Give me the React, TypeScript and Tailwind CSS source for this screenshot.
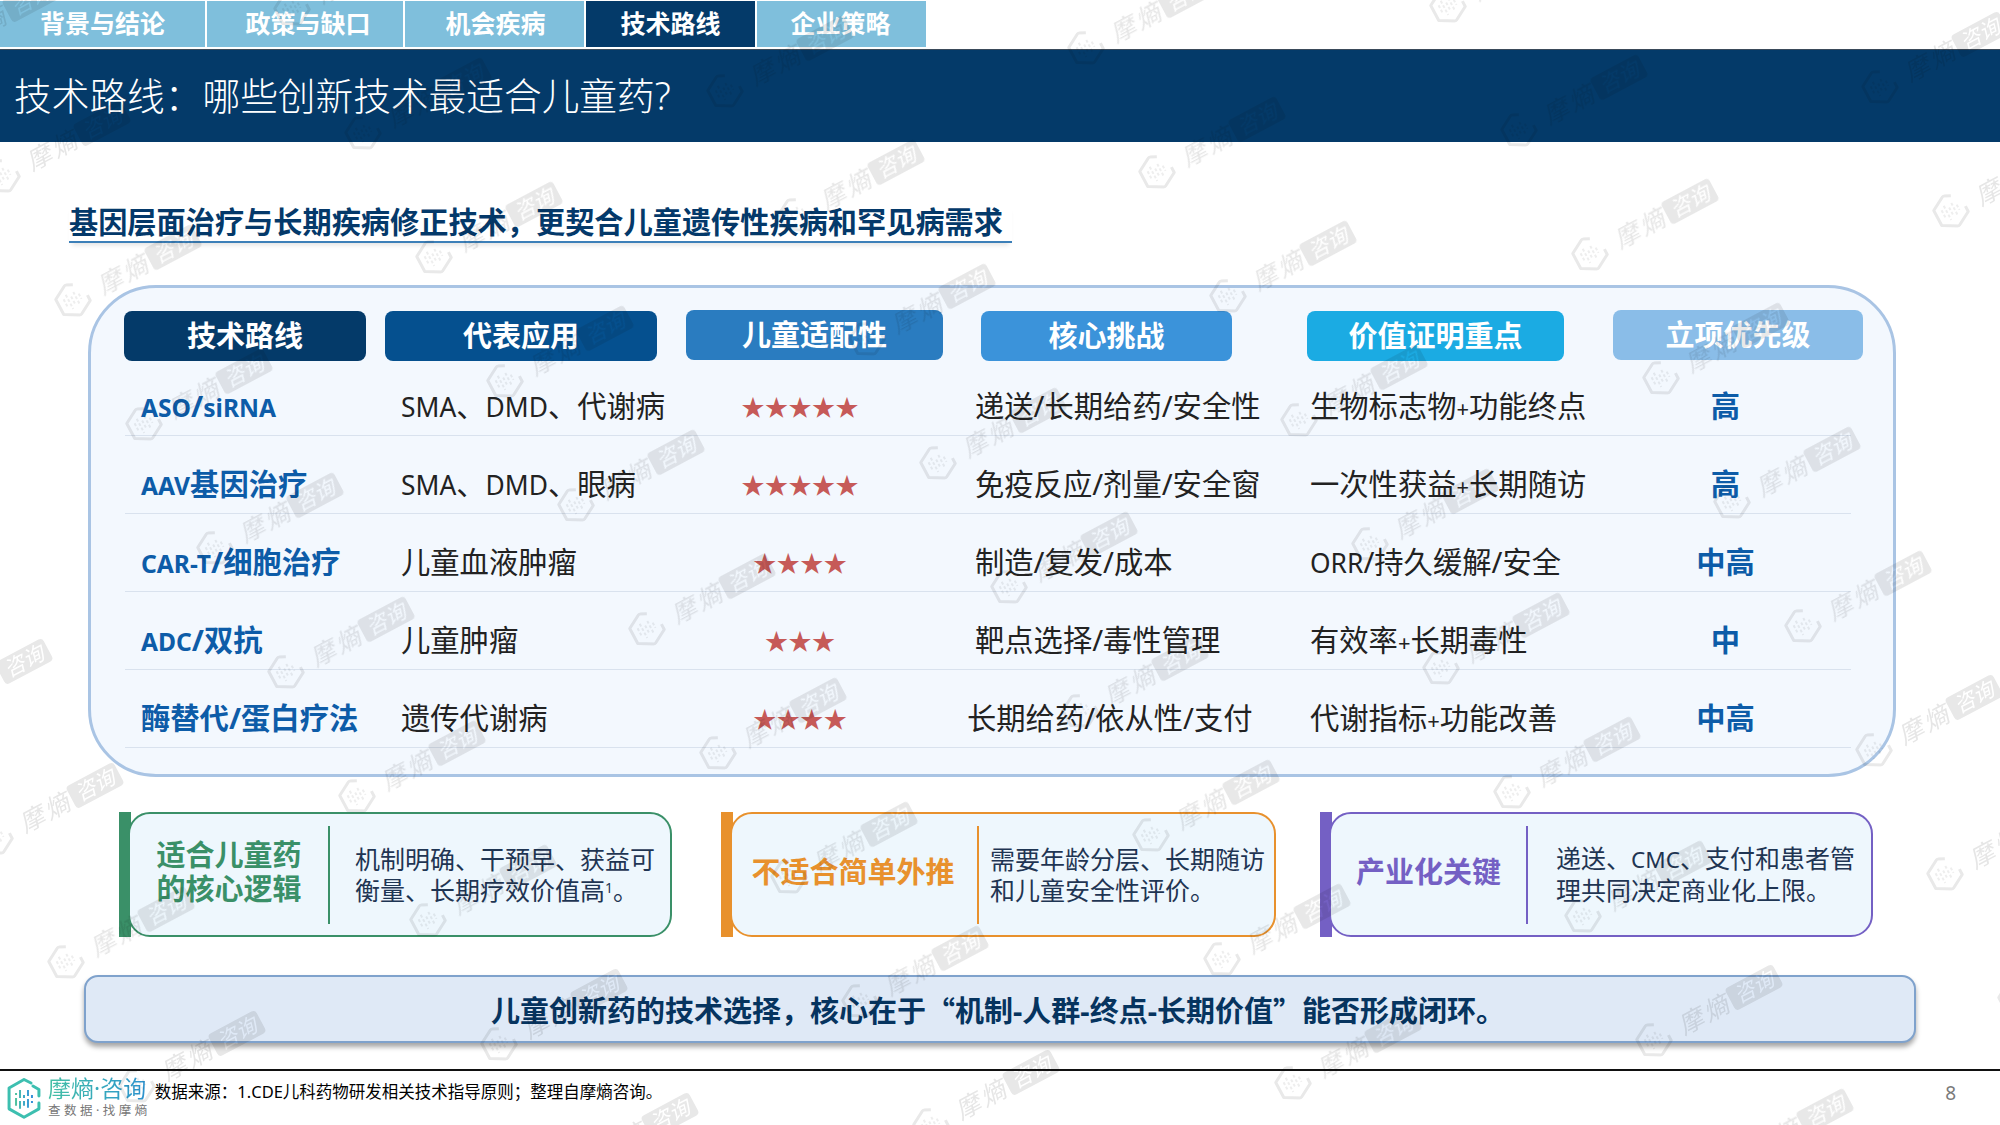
const tabs = [
  { label: "背景与结论", className: "w-[205px]" },
  { label: "政策与缺口", className: "w-[196px] pl-[6px]" },
  { label: "机会疾病", className: "w-[179px] pl-[2px]" },
  { label: "技术路线", className: "w-[169px]", active: true },
  { label: "企业策略", className: "w-[169px] pr-[2px]" },
];

const headers = [
  { label: "技术路线", className: "w-[242px] ml-0 bg-[#043a69]" },
  { label: "代表应用", className: "w-[272px] ml-[19px] bg-[#05508f]" },
  { label: "儿童适配性", className: "w-[257px] ml-[29px] -mt-px bg-[#2a7cc0]" },
  { label: "核心挑战", className: "w-[251px] ml-[38px] bg-[#3b93da]" },
  { label: "价值证明重点", className: "w-[257px] ml-[75px] bg-[#1babe3]" },
  { label: "立项优先级", className: "w-[250px] ml-[49px] -mt-px bg-[#8abde8]" },
];

const rows = [
  { tech: "ASO/siRNA", app: "SMA、DMD、代谢病", stars: "★★★★★", challenge: "递送/长期给药/安全性", value: "生物标志物+功能终点", level: "高" },
  { tech: "AAV基因治疗", app: "SMA、DMD、眼病", stars: "★★★★★", challenge: "免疫反应/剂量/安全窗", value: "一次性获益+长期随访", level: "高" },
  { tech: "CAR-T/细胞治疗", app: "儿童血液肿瘤", stars: "★★★★", challenge: "制造/复发/成本", value: "ORR/持久缓解/安全", level: "中高" },
  { tech: "ADC/双抗", app: "儿童肿瘤", stars: "★★★", challenge: "靶点选择/毒性管理", value: "有效率+长期毒性", level: "中" },
  { tech: "酶替代/蛋白疗法", app: "遗传代谢病", stars: "★★★★", challenge: "长期给药/依从性/支付", value: "代谢指标+功能改善", level: "中高", nudge: true },
];

// watermark lattice, measured off the reference
const marks: { x: number; y: number }[] = [];
for (let i = -6; i <= 8; i++) {
  for (let j = -2; j <= 10; j++) {
    const x = 1157 + 361.5 * i + 71 * j;
    const y = 172 - 42.5 * i + 124 * j;
    if (x > -170 && x < 2040 && y > -40 && y < 1170) marks.push({ x, y });
  }
}

// latin runs sit smaller than the CJK around them in the reference
function Mixed({ text, bold }: { text: string; bold?: boolean }) {
  const parts = text.split(/([A-Za-z+-]+)/);
  return (
    <>
      {parts.map((part, i) => {
        if (i % 2 === 0) return part;
        if (part === "+") {
          return (
            <span key={i} className="text-[0.75em]">
              {part}
            </span>
          );
        }
        return (
          <span key={i} className={bold ? "text-[0.84em]" : "text-[0.9em]"}>
            {part}
          </span>
        );
      })}
    </>
  );
}

function HexLogo({ size, stroke }: { size: number; stroke: string }) {
  return (
    <svg width={size} height={size * 1.2} viewBox="0 0 34 41" fill="none">
      <path d="M24 5 17 1.5 2 10v21l15 8.5L32 31v-6" stroke={stroke} strokeWidth="3" strokeLinejoin="round" strokeLinecap="round" />
      <path d="M26 8l6 3.5V18" stroke={stroke} strokeWidth="3" strokeLinecap="round" strokeLinejoin="round" />
      <path d="M9 15v2M9 20v8" stroke="#4cc1a0" strokeWidth="2" />
      <path d="M13 12v8M13 23v8" stroke="#46b6b4" strokeWidth="2" />
      <path d="M17 17v3M17 23v5" stroke="#3fa8c6" strokeWidth="2" />
      <path d="M21 12v6M21 21v9" stroke="#3a9dd4" strokeWidth="2" />
      <path d="M25 17v3M25 23v2" stroke="#3590d8" strokeWidth="2" />
    </svg>
  );
}

function Watermark({ x, y }: { x: number; y: number }) {
  return (
    <div
      className="absolute flex h-[36px] w-max origin-[18px_18px] -rotate-[28deg] items-center whitespace-nowrap"
      style={{ left: x - 18, top: y - 18 }}
    >
      <svg width="36" height="36" viewBox="0 0 36 36" fill="none">
        <path d="M25 4.500 18 1 3 9.500v17L18 35l15-8.500v-6" stroke="#e9e9e9" strokeWidth="3" strokeLinejoin="round" />
        <path d="M10 13v10M14 10v16M18 14v10M22 11v13M26 15v6" stroke="#eeeeee" strokeWidth="2" strokeDasharray="3 2" />
      </svg>
      <span className="ml-[11px] text-[25px] leading-none tracking-[3px] text-[#e6e6e6] italic">摩熵</span>
      <span className="ml-[1px] flex h-[25px] w-[54px] items-center justify-center rounded-[4px] bg-[#e8e8e8] text-[21px] leading-none text-white italic">
        咨询
      </span>
    </div>
  );
}

function Callout({
  wrapClass,
  barColor,
  cardClass,
  titleClass,
  title,
  bodyClass,
  body,
}: {
  wrapClass: string;
  barColor: string;
  cardClass: string;
  titleClass: string;
  title: React.ReactNode;
  bodyClass: string;
  body: React.ReactNode;
}) {
  return (
    <div className={`flex h-[125px] ${wrapClass}`}>
      <div className={`w-[12px] ${barColor}`}></div>
      <div className={`relative -ml-[3px] flex items-center rounded-[22px] border-2 bg-[#eef7fd] ${cardClass}`}>
        <div className={`-mt-[5px] shrink-0 text-center text-[29px] leading-[34px] font-bold ${titleClass}`}>{title}</div>
        <div className={`h-[98px] w-[2px] shrink-0 ${barColor}`}></div>
        <div className={`text-[25px] leading-[31px] whitespace-nowrap text-[#1f3553] ${bodyClass}`}>{body}</div>
      </div>
    </div>
  );
}

export default function App() {
  return (
    <div
      lang="zh-CN"
      className="relative h-[1125px] w-[2000px] overflow-hidden bg-white font-['Noto_Sans','Noto_Sans_CJK_SC',sans-serif]"
    >
      {/* tabs */}
      <div className="flex h-[47px] gap-[2px] pt-[1px]">
        {tabs.map((tab) => (
          <div
            key={tab.label}
            className={`flex items-center justify-center text-[25px] font-bold text-white ${tab.className} ${
              tab.active ? "bg-[#043a69]" : "bg-[#7fbfdc]"
            }`}
          >
            {tab.label}
          </div>
        ))}
      </div>

      {/* title */}
      <div className="mt-[2px] flex h-[93px] items-center border-t border-[#3a4a5a] bg-[#043a69] pl-[14px] text-[37.700px] font-light text-white">
        技术路线：哪些创新技术最适合儿童药?
      </div>

      {/* subheading */}
      <div className="mt-[62px] ml-[69px] h-[39px] w-[943px] border-b-2 border-[#3c7fb8] text-[29.200px] leading-[36px] whitespace-nowrap font-bold text-[#04396a] shadow-[0_5px_5px_-3px_rgba(0,0,0,0.12)]">
        基因层面治疗与长期疾病修正技术，更契合儿童遗传性疾病和罕见病需求
      </div>

      {/* table panel */}
      <div className="mt-[42px] ml-[88px] h-[492px] w-[1808px] rounded-[68px] border-[3px] border-[#a9c4e4] bg-[#f3f8fe] px-[33px] pt-[23px]">
        <div className="flex">
          {headers.map((h) => (
            <div
              key={h.label}
              className={`flex h-[50px] shrink-0 items-center justify-center rounded-[8px] text-[29px] font-bold text-white ${h.className}`}
            >
              {h.label}
            </div>
          ))}
        </div>
        <div className="-mt-[3px] ml-px w-[1726px]">
          {rows.map((row) => (
            <div
              key={row.tech}
              className="grid h-[78px] grid-cols-[276px_279px_240px_390px_290px_251px] items-center border-b border-[#d9e2ee] pt-[20px] text-[29.300px] whitespace-nowrap text-[#222222]"
            >
              <div className="pl-[16px] font-bold text-[#0d5ca8]">
                <Mixed text={row.tech} bold />
              </div>
              <div>
                <Mixed text={row.app} />
              </div>
              <div className="text-center font-['Noto_Sans_CJK_SC',sans-serif] text-[23.500px] text-[#c65a58]">{row.stars}</div>
              <div className={row.nudge ? "pl-[47px]" : "pl-[55px]"}>{row.challenge}</div>
              <div>
                <Mixed text={row.value} />
              </div>
              <div className="text-center font-bold text-[#0d5ca8]">{row.level}</div>
            </div>
          ))}
        </div>
      </div>

      {/* callouts */}
      <div className="mt-[35px] ml-[119px] flex">
        <Callout
          wrapClass="ml-0"
          barColor="bg-[#3a9068]"
          cardClass="w-[544px] border-[#3a9068]"
          titleClass="w-[198px] text-[#3a9068]"
          title={
            <>
              适合儿童药
              <br />
              的核心逻辑
            </>
          }
          bodyClass="ml-[25px]"
          body={
            <>
              机制明确、干预早、获益可
              <br />
              衡量、长期疗效价值高<sup className="text-[14px]">1</sup>。
            </>
          }
        />
        <Callout
          wrapClass="ml-[49px]"
          barColor="bg-[#e8912d]"
          cardClass="w-[546px] border-[#e8912d]"
          titleClass="w-[245px] pr-[3px] text-[#e8912d]"
          title="不适合简单外推"
          bodyClass="ml-[11px]"
          body={
            <>
              需要年龄分层、长期随访
              <br />
              和儿童安全性评价。
            </>
          }
        />
        <Callout
          wrapClass="ml-[44px]"
          barColor="bg-[#7460c4]"
          cardClass="w-[544px] border-[#7460c4]"
          titleClass="w-[195px] text-[#7460c4]"
          title="产业化关键"
          bodyClass="ml-[28px]"
          body={
            <>
              递送、<Mixed text="CMC" />、支付和患者管
              <br />
              理共同决定商业化上限。
            </>
          }
        />
      </div>

      {/* conclusion */}
      <div className="mt-[38px] ml-[84px] flex h-[68px] w-[1832px] items-center justify-center rounded-[14px] border-2 border-[#7fa2cc] bg-[#dfe9f6] pt-[3px] pr-[4px] text-[29px] font-bold whitespace-nowrap text-[#06345f] shadow-[0_4px_5px_rgba(0,0,0,0.35)]">
        儿童创新药的技术选择，核心在于
        <span className="font-['Noto_Sans_CJK_SC',sans-serif]">“</span>
        机制-人群-终点-长期价值
        <span className="font-['Noto_Sans_CJK_SC',sans-serif]">”</span>
        能否形成闭环。
      </div>

      {/* footer */}
      <div className="mt-[26px] flex h-[56px] items-center border-t-2 border-[#111111]">
        <div className="mt-[1px] ml-[7px]">
          <HexLogo size={34} stroke="#3dbfb0" />
        </div>
        <div className="ml-[7px] flex flex-col">
          <span className="-mt-[4px] bg-gradient-to-r from-[#45c0a4] to-[#2d8fd0] bg-clip-text text-[23px] leading-[30px] text-transparent">
            摩熵·咨询
          </span>
          <span className="text-[12.500px] leading-[16px] tracking-[3.500px] whitespace-nowrap text-[#777777]">查数据·找摩熵</span>
        </div>
        <div className="-mt-[12px] ml-[4px] text-[16.500px] whitespace-nowrap text-black">
          数据来源：1.CDE儿科药物研发相关技术指导原则；整理自摩熵咨询。
        </div>
        <div className="mr-[44px] -mt-[9px] ml-auto text-[19px] text-[#7a7a7a]">8</div>
      </div>

      {/* watermarks */}
      <div className="pointer-events-none absolute inset-0 mix-blend-multiply">
        {marks.map((m) => (
          <Watermark key={`${m.x}-${m.y}`} x={m.x} y={m.y} />
        ))}
      </div>
    </div>
  );
}
